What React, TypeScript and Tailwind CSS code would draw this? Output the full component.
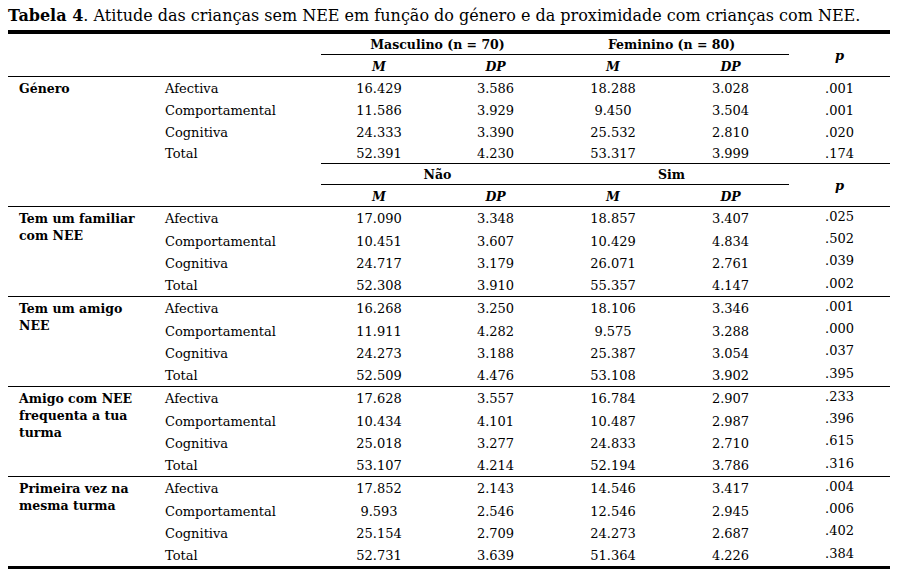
import React from 'react';

type Row = [string, string, string, string, string, string];

interface Group {
  label: string[];
  rows: Row[];
}

const genero: Group = {
  label: ['Género'],
  rows: [
    ['Afectiva', '16.429', '3.586', '18.288', '3.028', '.001'],
    ['Comportamental', '11.586', '3.929', '9.450', '3.504', '.001'],
    ['Cognitiva', '24.333', '3.390', '25.532', '2.810', '.020'],
    ['Total', '52.391', '4.230', '53.317', '3.999', '.174'],
  ],
};

const proximidade: Group[] = [
  {
    label: ['Tem um familiar', 'com NEE'],
    rows: [
      ['Afectiva', '17.090', '3.348', '18.857', '3.407', '.025'],
      ['Comportamental', '10.451', '3.607', '10.429', '4.834', '.502'],
      ['Cognitiva', '24.717', '3.179', '26.071', '2.761', '.039'],
      ['Total', '52.308', '3.910', '55.357', '4.147', '.002'],
    ],
  },
  {
    label: ['Tem um amigo', 'NEE'],
    rows: [
      ['Afectiva', '16.268', '3.250', '18.106', '3.346', '.001'],
      ['Comportamental', '11.911', '4.282', '9.575', '3.288', '.000'],
      ['Cognitiva', '24.273', '3.188', '25.387', '3.054', '.037'],
      ['Total', '52.509', '4.476', '53.108', '3.902', '.395'],
    ],
  },
  {
    label: ['Amigo com NEE', 'frequenta a tua', 'turma'],
    rows: [
      ['Afectiva', '17.628', '3.557', '16.784', '2.907', '.233'],
      ['Comportamental', '10.434', '4.101', '10.487', '2.987', '.396'],
      ['Cognitiva', '25.018', '3.277', '24.833', '2.710', '.615'],
      ['Total', '53.107', '4.214', '52.194', '3.786', '.316'],
    ],
  },
  {
    label: ['Primeira vez na', 'mesma turma'],
    rows: [
      ['Afectiva', '17.852', '2.143', '14.546', '3.417', '.004'],
      ['Comportamental', '9.593', '2.546', '12.546', '2.945', '.006'],
      ['Cognitiva', '25.154', '2.709', '24.273', '2.687', '.402'],
      ['Total', '52.731', '3.639', '51.364', '4.226', '.384'],
    ],
  },
];

const Header: React.FC<{ a: string; b: string }> = ({ a, b }) => (
  <div className="flex border-b border-black">
    <div className="w-[313px]" />
    <div className="w-[468px] flex flex-col">
      <div className="h-[21px] pt-[3px] flex border-b border-black font-bold text-[12.5px]">
        <div className="w-[233px] flex items-center justify-center">{a}</div>
        <div className="w-[235px] flex items-center justify-center">{b}</div>
      </div>
      <div className="h-[21px] pt-[3px] flex font-bold italic text-[12.5px]">
        <div className="w-[116px] flex items-center justify-center">M</div>
        <div className="w-[117px] flex items-center justify-center">DP</div>
        <div className="w-[118px] flex items-center justify-center">M</div>
        <div className="w-[117px] flex items-center justify-center">DP</div>
      </div>
    </div>
    <div className="w-[101px] flex items-center justify-center font-bold italic text-[13px] pt-[1px]">p</div>
  </div>
);

const GroupBlock: React.FC<{ group: Group; first?: boolean; border?: boolean }> = ({ group, first, border }) => {
  const rowH = first ? 'h-[21.75px]' : 'h-[22.25px]';
  return (
    <div className={`flex ${border ? 'border-b border-black' : ''}`}>
      <div className="w-[152px] pl-[11px] pt-[3px] font-bold text-[12.5px] leading-[17px] whitespace-nowrap">
        {group.label.map((l) => (
          <div key={l}>{l}</div>
        ))}
      </div>
      <div className="w-[730px] flex flex-col">
        {group.rows.map((r, i) => {
          const last = first && i === group.rows.length - 1;
          const line = last ? 'border-b border-black' : '';
          return (
            <div key={r[0]} className={`${rowH} flex`}>
              <div className="w-[161px] pl-[5px] pt-[2px] flex items-center">{r[0]}</div>
              <div className={`w-[116px] pt-[2px] flex items-center justify-center ${line}`}>{r[1]}</div>
              <div className={`w-[117px] pt-[2px] flex items-center justify-center ${line}`}>{r[2]}</div>
              <div className={`w-[118px] pt-[2px] flex items-center justify-center ${line}`}>{r[3]}</div>
              <div className={`w-[117px] pt-[2px] flex items-center justify-center ${line}`}>{r[4]}</div>
              <div
                className={`w-[101px] flex items-center justify-center ${line} ${first ? 'pt-[2px]' : 'pb-[3px]'}`}
              >
                {r[5]}
              </div>
            </div>
          );
        })}
      </div>
    </div>
  );
};

export default function App() {
  return (
    <div
      className="w-[902px] h-[584px] bg-white text-black text-[13px] overflow-hidden"
      style={{ fontFamily: '"DejaVu Serif", "Liberation Serif", serif' }}
    >
      <div className="ml-[8px] w-[882px]">
        <div className="h-[30px] pt-[6px] text-[16px] leading-[20px] whitespace-nowrap">
          <span className="font-bold">Tabela 4</span>. Atitude das crianças sem NEE em função do género e da
          proximidade com crianças com NEE.
        </div>
        <div className="h-[4px] bg-black" />
        <Header a="Masculino (n = 70)" b="Feminino (n = 80)" />
        <GroupBlock group={genero} first />
        <Header a="Não" b="Sim" />
        {proximidade.map((g, i) => (
          <GroupBlock key={g.label[0]} group={g} border={i < proximidade.length - 1} />
        ))}
        <div className="h-[3px] bg-black" />
      </div>
    </div>
  );
}
